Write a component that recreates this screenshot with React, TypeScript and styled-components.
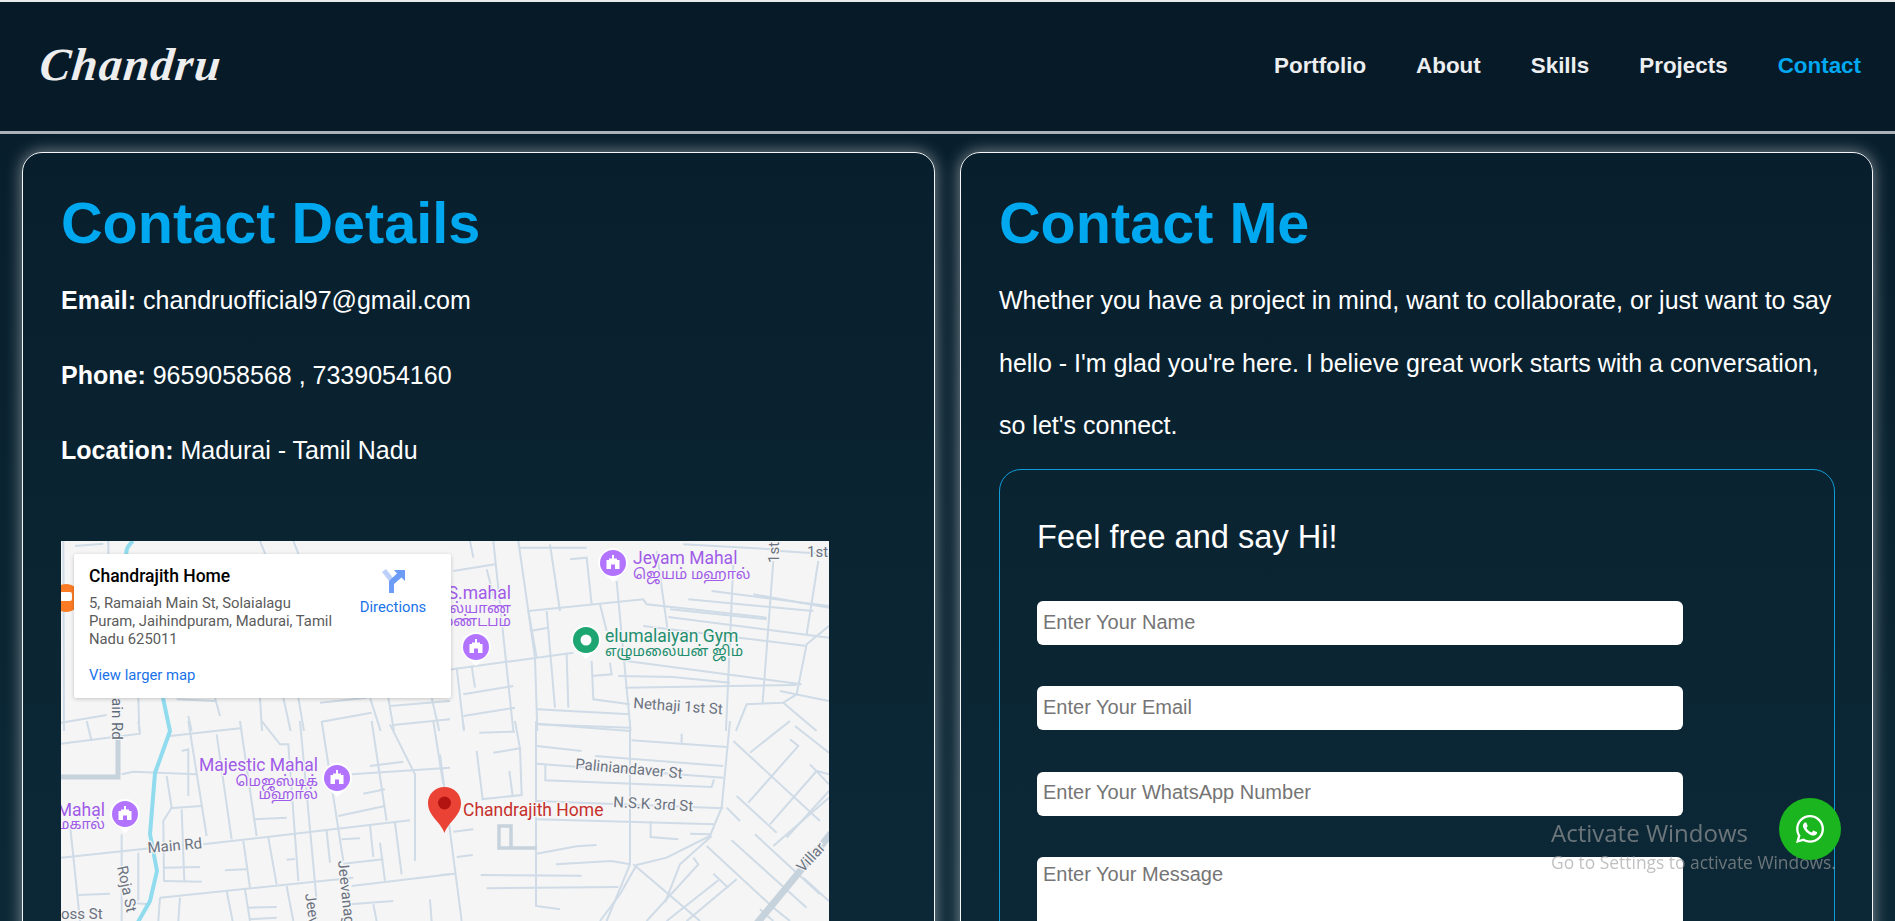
import { FunctionComponent } from "react";
import styled, { createGlobalStyle } from "styled-components";
import { FaWhatsapp } from "react-icons/fa";

const navLinks = ["Portfolio", "About", "Skills", "Projects", "Contact"];

// road traces, written in the pixel grid of each map tile (3x the page)
const roadTiles: { x: number; y: number; roads: string[] }[] = [
  {
    x: 50,
    y: 530,
    roads: [
      "M40 30 L42 600",
      "M175 30 L175 80",
      "M630 30 L650 80",
      "M730 30 L750 80",
      "M75 45 L160 38",
      "M265 500 L268 600",
      "M495 500 L510 555",
      "M630 500 L636 600",
      "M700 500 L722 600",
      "M745 500 L762 600",
      "M960 500 L992 600",
      "M1015 500 L1032 600",
      "M1145 500 L1168 600",
      "M33 575 L170 552",
      "M380 505 L495 510",
      "M810 515 L950 500",
      "M815 572 L965 545",
      "M1020 525 L1200 510",
      "M1030 582 L1200 565",
      "M415 555 L425 600",
    ],
  },
  {
    x: 440,
    y: 530,
    roads: [
      "M90 30 L100 80",
      "M40 120 L165 100",
      "M140 115 L165 210",
      "M235 30 L285 380 L292 600",
      "M330 40 L360 240",
      "M160 30 L220 600",
      "M265 240 L610 205 L620 220 L980 260",
      "M0 420 L400 365",
      "M50 410 L72 600",
      "M95 405 L105 470",
      "M70 490 L220 465",
      "M70 555 L225 530",
      "M265 240 L290 380",
      "M320 240 L345 530",
      "M270 300 L325 290",
      "M380 370 L385 530",
      "M240 50 L440 50",
      "M390 85 L440 80 L455 220",
      "M480 220 L500 300",
      "M455 390 L460 505 L570 520",
      "M455 435 L515 430 L510 395",
      "M530 150 L572 600",
      "M650 60 L682 290",
      "M880 100 L858 600",
      "M1000 90 L968 515",
      "M1135 90 L1100 310",
      "M1167 285 L1100 340 L1070 490 L1030 515 L920 520 L888 600",
      "M1030 515 L1130 600",
      "M745 205 L1120 240",
      "M690 235 L980 265",
      "M685 258 L1167 320",
      "M610 285 L1100 345",
      "M815 180 L1167 225",
      "M940 190 L1167 230",
      "M730 40 L1000 55",
      "M1020 60 L1167 70",
      "M560 390 L1085 460",
      "M535 435 L700 438 L870 455",
      "M555 470 L1070 462",
      "M1020 480 L1167 510",
      "M290 535 L570 550",
      "M290 578 L570 600",
    ],
  },
  {
    x: 50,
    y: 720,
    roads: [
      "M33 68 L270 38 L265 0",
      "M110 0 L125 60",
      "M360 45 L570 22",
      "M415 0 L470 345",
      "M500 40 L545 355",
      "M570 0 L620 345",
      "M635 0 L690 70 L715 70 L745 480",
      "M750 0 L800 540",
      "M815 0 L880 420",
      "M965 0 L1010 300",
      "M1020 10 L1095 160 L1095 420",
      "M1150 0 L1180 190",
      "M960 135 L1060 122",
      "M905 160 L1200 140",
      "M215 160 L250 152 L440 160",
      "M395 90 L415 85 L415 225",
      "M350 165 L365 260 L340 300 L342 480",
      "M360 262 L455 255",
      "M395 265 L403 480",
      "M340 440 L450 438",
      "M340 480 L455 482",
      "M610 295 L710 290",
      "M940 218 L1005 205",
      "M865 285 L1005 255",
      "M33 410 L300 382",
      "M460 370 L1080 298",
      "M60 310 L90 600",
      "M215 340 L215 600",
      "M265 395 L265 540",
      "M580 360 L600 500",
      "M655 350 L680 490",
      "M830 330 L840 425",
      "M960 312 L970 408",
      "M1035 305 L1055 460",
      "M875 355 L930 352",
      "M880 428 L1000 415",
      "M990 365 L1005 480",
      "M525 448 L590 445",
      "M710 416 L735 414",
      "M330 530 L910 470",
      "M905 495 L1200 460",
      "M330 530 L325 600",
      "M390 530 L385 600",
      "M530 510 L548 600",
      "M585 505 L600 600",
      "M710 495 L730 600",
      "M900 550 L1030 540",
      "M1140 535 L1145 600",
      "M970 550 L980 600",
      "M595 560 L680 558",
      "M600 595 L680 590",
      "M85 522 L180 518",
      "M240 545 L300 550",
    ],
  },
  {
    x: 440,
    y: 720,
    roads: [
      "M0 100 L65 600",
      "M68 0 L72 25",
      "M118 35 L225 32",
      "M225 0 L240 82 L245 222 L125 235",
      "M160 95 L240 82",
      "M110 90 L128 235",
      "M208 150 L218 225",
      "M40 332 L100 325",
      "M50 408 L98 402",
      "M0 462 L48 458",
      "M122 462 L425 464",
      "M140 502 L535 498",
      "M288 0 L288 555 L360 565",
      "M290 10 L570 20",
      "M290 75 L425 90",
      "M465 105 L850 135",
      "M290 128 L850 170",
      "M316 130 L316 178 L815 198 L822 175",
      "M290 240 L850 262",
      "M290 295 L825 310",
      "M632 300 L632 348 L715 355",
      "M290 398 L410 376 L470 372",
      "M348 430 L515 420 L570 430",
      "M570 0 L570 430 L500 600",
      "M575 58 L860 78",
      "M725 38 L725 68",
      "M870 0 L845 260 L810 345 L680 410 L590 432 L540 520 L480 600",
      "M580 430 L780 600",
      "M750 338 L810 340",
      "M800 375 L1000 560 L1050 600",
      "M815 345 L720 430 L675 545",
      "M760 410 L775 430 L620 600",
      "M820 458 L865 500",
      "M835 478 L680 600",
      "M890 475 L740 600",
      "M880 60 L1140 300",
      "M930 95 L1050 0",
      "M890 225 L1010 335",
      "M860 260 L900 300",
      "M1065 15 L1167 95",
      "M945 340 L1140 520",
      "M875 358 L1100 560",
      "M925 245 L1075 75 L1050 55",
      "M990 310 L1130 150 L1167 160",
      "M1040 350 L1167 210",
      "M1000 375 L1167 230",
      "M960 565 L1000 600",
      "M1110 130 L1167 190",
      "M1090 470 L1167 540",
    ],
  },
];

const GlobalStyle = createGlobalStyle`
  html, body {
    margin: 0;
    padding: 0;
    height: 100%;
    overflow: hidden;
  }
  body {
    font-family: "Liberation Sans", Arial, sans-serif;
    color: #fff;
  }
`;

const Page = styled.div`
  height: 921px;
  overflow: hidden;
  background: linear-gradient(180deg, #071c2a 0%, #0a2331 50%, #0c2836 100%);
`;

const Navbar = styled.nav`
  height: 129px;
  border-top: 2px solid #e8eaec;
  border-bottom: 3px solid #aab2b8;
  background: #071a28;
  display: flex;
  align-items: center;
  justify-content: space-between;
  padding: 0 34px 0 40px;
`;

const Logo = styled.div`
  font-family: "Liberation Serif", serif;
  font-style: italic;
  font-weight: 700;
  font-size: 46px;
  letter-spacing: 1.5px;
  color: #eeeeee;
  line-height: 1;
  transform: translateY(-2px) skewX(-6deg);
`;

const NavLinks = styled.ul`
  list-style: none;
  display: flex;
  gap: 50px;
  margin: 0;
  padding: 0 0 2px;
`;

const NavLink = styled.li<{ $active?: boolean }>`
  font-size: 22.4px;
  font-weight: 700;
  color: ${(p) => (p.$active ? "#00a8f0" : "#eceef0")};
`;

const Columns = styled.main`
  display: grid;
  grid-template-columns: 1fr 1fr;
  gap: 25px;
  padding: 18px 22px 0;
`;

const Card = styled.section`
  border: 1px solid #f4f6f7;
  border-radius: 20px;
  box-shadow: 0 0 16px rgba(255, 255, 255, 0.5);
  padding: 34px 37px 40px 38px;
  height: 1000px;
`;

const Heading = styled.h1`
  margin: 0 0 10px;
  font-size: 57.6px;
  line-height: 72px;
  font-weight: 700;
  color: #00a8f0;
`;

const Paragraph = styled.p`
  margin: 0 0 12.5px;
  font-size: 25px;
  line-height: 62.5px;
  color: #fff;
`;

const MapFrame = styled.div`
  position: relative;
  width: 768px;
  height: 450px;
  margin-top: 59px;
  overflow: hidden;
  background: #f5f5f5;
`;

const MapArt = styled.svg`
  display: block;
  width: 768px;
  height: 450px;
  font-family: Roboto, "Noto Sans Tamil", "Noto Sans", sans-serif;
`;

const InfoCard = styled.div`
  position: absolute;
  left: 13px;
  top: 13px;
  box-sizing: border-box;
  width: 377px;
  height: 144px;
  padding: 10px 22px 10px 15px;
  display: flex;
  justify-content: space-between;
  background: #fff;
  border-radius: 2px;
  box-shadow: 0 1px 4px rgba(0, 0, 0, 0.2);
  font-family: Roboto, sans-serif;
`;

const InfoText = styled.div`
  width: 260px;
`;

const PlaceName = styled.div`
  font-size: 17.5px;
  font-weight: 500;
  line-height: 24px;
  color: #000;
  margin-bottom: 6px;
`;

const Address = styled.div`
  font-size: 14.8px;
  line-height: 18px;
  color: #5b5b5b;
`;

const MapLink = styled.div`
  margin-top: 18px;
  font-size: 14.8px;
  line-height: 18px;
  color: #1a73e8;
`;

const Directions = styled.div`
  width: 72px;
  display: flex;
  flex-direction: column;
  align-items: center;
  gap: 5px;
  padding-top: 5px;
  font-size: 14.8px;
  line-height: 18px;
  color: #1a73e8;
`;

const FormBox = styled.form`
  border: 1px solid #0f9bd8;
  border-radius: 22px;
  padding: 48px 37px 40px;
  margin-top: 0.5px;
`;

const FormTitle = styled.h3`
  margin: 0 0 45px;
  font-size: 32.6px;
  line-height: 38px;
  font-weight: 400;
  color: #fff;
`;

const Field = styled.input`
  display: block;
  box-sizing: border-box;
  width: 85%;
  height: 44px;
  margin-bottom: 41.25px;
  padding: 0 6px 2px;
  border: none;
  border-radius: 6px;
  outline: none;
  background: #fff;
  font-family: "Liberation Sans", Arial, sans-serif;
  font-size: 20px;
  &::placeholder {
    color: #757575;
  }
`;

const MessageField = styled.textarea`
  display: block;
  box-sizing: border-box;
  width: 85%;
  height: 150px;
  padding: 6px;
  border: none;
  border-radius: 6px;
  outline: none;
  resize: none;
  background: #fff;
  font-family: "Liberation Sans", Arial, sans-serif;
  font-size: 20px;
  &::placeholder {
    color: #757575;
  }
`;

const WhatsappButton = styled.a`
  position: fixed;
  left: 1779px;
  top: 798px;
  width: 62px;
  height: 62px;
  border-radius: 50%;
  display: flex;
  align-items: center;
  justify-content: center;
  background: #1ab51f;
  color: #fff;
  font-size: 32px;
`;

const ActivateNotice = styled.div`
  position: fixed;
  left: 1551px;
  top: 817px;
  font-family: "Open Sans", sans-serif;
  color: rgba(160, 160, 160, 0.65);
  pointer-events: none;
`;

const ActivateTitle = styled.div`
  font-size: 24px;
  line-height: 32px;
`;

const ActivateHint = styled.div`
  font-size: 17.4px;
  line-height: 24px;
  margin-top: 1px;
`;

const Pin: FunctionComponent<{ x: number; y: number; color: string; gym?: boolean }> = ({
  x,
  y,
  color,
  gym,
}) => (
  <g transform={`translate(${x} ${y})`}>
    <path d="M-15 0 A15 15 0 1 1 15 0 Q15 6 9 11 L0 19 L-9 11 Q-15 6 -15 0 Z" fill="#fff" opacity="0.95" />
    <circle r="13" fill={color} />
    {gym ? (
      <circle r="5.5" fill="#fff" />
    ) : (
      <path d="M-6.500 6 V-3 H-4 V-4.500 H-1 V-8 H1 V-4.500 H4 V-3 H6.500 V6 H2 V1.500 H-2 V6 Z" fill="#fff" />
    )}
  </g>
);

const Label: FunctionComponent<{
  x: number;
  y: number;
  color?: string;
  size?: number;
  rotate?: number;
  end?: boolean;
  text: string;
}> = ({ x, y, color = "#6b7280", size = 15, rotate = 0, end, text }) => (
  <text
    x={x}
    y={y}
    fill={color}
    fontSize={size}
    textAnchor={end ? "end" : "start"}
    transform={rotate ? `rotate(${rotate} ${x} ${y})` : undefined}
    stroke="#f5f5f5"
    strokeWidth="2.5"
    paintOrder="stroke"
  >
    {text}
  </text>
);

const PURPLE = "#a05be8";
const GREEN = "#1e8e6e";

const MapDrawing = () => (
  <MapArt viewBox="61 540 768 450">
    <rect x="61" y="540" width="768" height="450" fill="#f5f5f5" />
    {roadTiles.map((tile) => (
      <g
        key={`${tile.x}-${tile.y}`}
        transform={`translate(${tile.x} ${tile.y}) scale(0.3333)`}
        fill="none"
        stroke="#cfdbe6"
        strokeWidth="6"
      >
        {tile.roads.map((d) => (
          <path key={d} d={d} />
        ))}
      </g>
    ))}
    {/* main roads and the canal */}
    <g fill="none" stroke="#c6d2dc" strokeLinecap="square">
      <path d="M61 776 H118 V725" strokeWidth="5" />
      <path d="M758 921 L829 835" strokeWidth="7" />
      <path d="M499 825 H511 V847 M499 825 V847 H535" strokeWidth="3.5" />
    </g>
    <path
      d="M133 540 Q124 548 127 556 M163 697 L170 730 L155 772 L150 833 L157 870 L150 900 L138 921"
      fill="none"
      stroke="#90dcee"
      strokeWidth="4"
    />
    <circle cx="66" cy="597" r="14" fill="#fb7b25" />
    <rect x="60" y="591" width="12" height="9" rx="2" fill="#fff" />

    <Label x={112} y={684} rotate={90} text="Main Rd" color="#5f6b7a" />
    <Label x={148} y={852} rotate={-5} text="Main Rd" />
    <Label x={117} y={866} rotate={78} text="Roja St" />
    <Label x={61} y={918} text="oss St" />
    <Label x={305} y={893} rotate={82} text="Jeevanagar" />
    <Label x={338} y={860} rotate={84} text="Jeevanagar" />
    <Label x={633} y={707} rotate={4} text="Nethaji 1st St" />
    <Label x={575} y={768} rotate={5} text="Paliniandaver St" />
    <Label x={613} y={806} rotate={3} text="N.S.K 3rd St" />
    <Label x={803} y={872} rotate={-47} text="Villar" />
    <Label x={807} y={556} text="1st" />
    <Label x={779} y={562} rotate={-90} text="1st St" />

    <Label x={633} y={563} size={17.5} color={PURPLE} text="Jeyam Mahal" />
    <Label x={633} y={578} size={14.5} color={PURPLE} text="ஜெயம் மஹால்" />
    <Label x={511} y={598} size={17.5} color={PURPLE} end text="S.mahal" />
    <Label x={511} y={612} size={14.5} color={PURPLE} end text="கல்யாண" />
    <Label x={511} y={625} size={14.5} color={PURPLE} end text="மண்டபம்" />
    <Label x={605} y={641} size={17.5} color={GREEN} text="elumalaiyan Gym" />
    <Label x={605} y={655} size={14.5} color={GREEN} text="எழுமலையன் ஜிம்" />
    <Label x={318} y={770} size={17.5} color={PURPLE} end text="Majestic Mahal" />
    <Label x={318} y={785} size={14.5} color={PURPLE} end text="மெஜஸ்டிக்" />
    <Label x={318} y={798} size={14.5} color={PURPLE} end text="மஹால்" />
    <Label x={105} y={815} size={17.5} color={PURPLE} end text="Mahal" />
    <Label x={105} y={828} size={14.5} color={PURPLE} end text="மகால்" />
    <Label x={463} y={815} size={17.5} color="#c5302b" text="Chandrajith Home" />

    <Pin x={613} y={562} color="#b274ff" />
    <Pin x={476} y={646} color="#b274ff" />
    <Pin x={337} y={777} color="#b274ff" />
    <Pin x={125} y={813} color="#b274ff" />
    <Pin x={586} y={639} color="#1ea672" gym />

    <path
      d="M444.500 786 C435 786 428 793 428 802 C428 815 440 820 444.500 832 C449 820 461 815 461 802 C461 793 454 786 444.500 786 Z"
      fill="#ea4335"
    />
    <circle cx="444.500" cy="802" r="6.500" fill="#b31412" />
  </MapArt>
);

const DirectionsIcon = () => (
  <svg width="24" height="24" viewBox="0 0 24 24">
    <path d="M1 3 L5 0 L13 10 V24 H8 V12 Z" fill="#bcd0fb" />
    <path d="M8 24 V12 L16 4.500 L13 1 H24 V12 L20.500 8.500 L13 15 V24 Z" fill="#6c9cf6" />
  </svg>
);

const App = () => {
  return (
    <Page>
      <GlobalStyle />
      <Navbar>
        <Logo>Chandru</Logo>
        <NavLinks>
          {navLinks.map((link) => (
            <NavLink key={link} $active={link === "Contact"}>
              {link}
            </NavLink>
          ))}
        </NavLinks>
      </Navbar>
      <Columns>
        <Card>
          <Heading>Contact Details</Heading>
          <Paragraph>
            <b>Email:</b> chandruofficial97@gmail.com
          </Paragraph>
          <Paragraph>
            <b>Phone:</b> 9659058568 , 7339054160
          </Paragraph>
          <Paragraph>
            <b>Location:</b> Madurai - Tamil Nadu
          </Paragraph>
          <MapFrame>
            <MapDrawing />
            <InfoCard>
              <InfoText>
                <PlaceName>Chandrajith Home</PlaceName>
                <Address>
                  5, Ramaiah Main St, Solaialagu
                  <br />
                  Puram, Jaihindpuram, Madurai, Tamil
                  <br />
                  Nadu 625011
                </Address>
                <MapLink>View larger map</MapLink>
              </InfoText>
              <Directions>
                <DirectionsIcon />
                Directions
              </Directions>
            </InfoCard>
          </MapFrame>
        </Card>
        <Card>
          <Heading>Contact Me</Heading>
          <Paragraph>
            Whether you have a project in mind, want to collaborate, or just want to say hello - I'm glad
            you're here. I believe great work starts with a conversation, so let's connect.
          </Paragraph>
          <FormBox>
            <FormTitle>Feel free and say Hi!</FormTitle>
            <Field placeholder="Enter Your Name" />
            <Field placeholder="Enter Your Email" />
            <Field placeholder="Enter Your WhatsApp Number" />
            <MessageField placeholder="Enter Your Message" />
          </FormBox>
        </Card>
      </Columns>
      <ActivateNotice>
        <ActivateTitle>Activate Windows</ActivateTitle>
        <ActivateHint>Go to Settings to activate Windows.</ActivateHint>
      </ActivateNotice>
      <WhatsappButton>
        <FaWhatsapp />
      </WhatsappButton>
    </Page>
  );
};

export default App;
